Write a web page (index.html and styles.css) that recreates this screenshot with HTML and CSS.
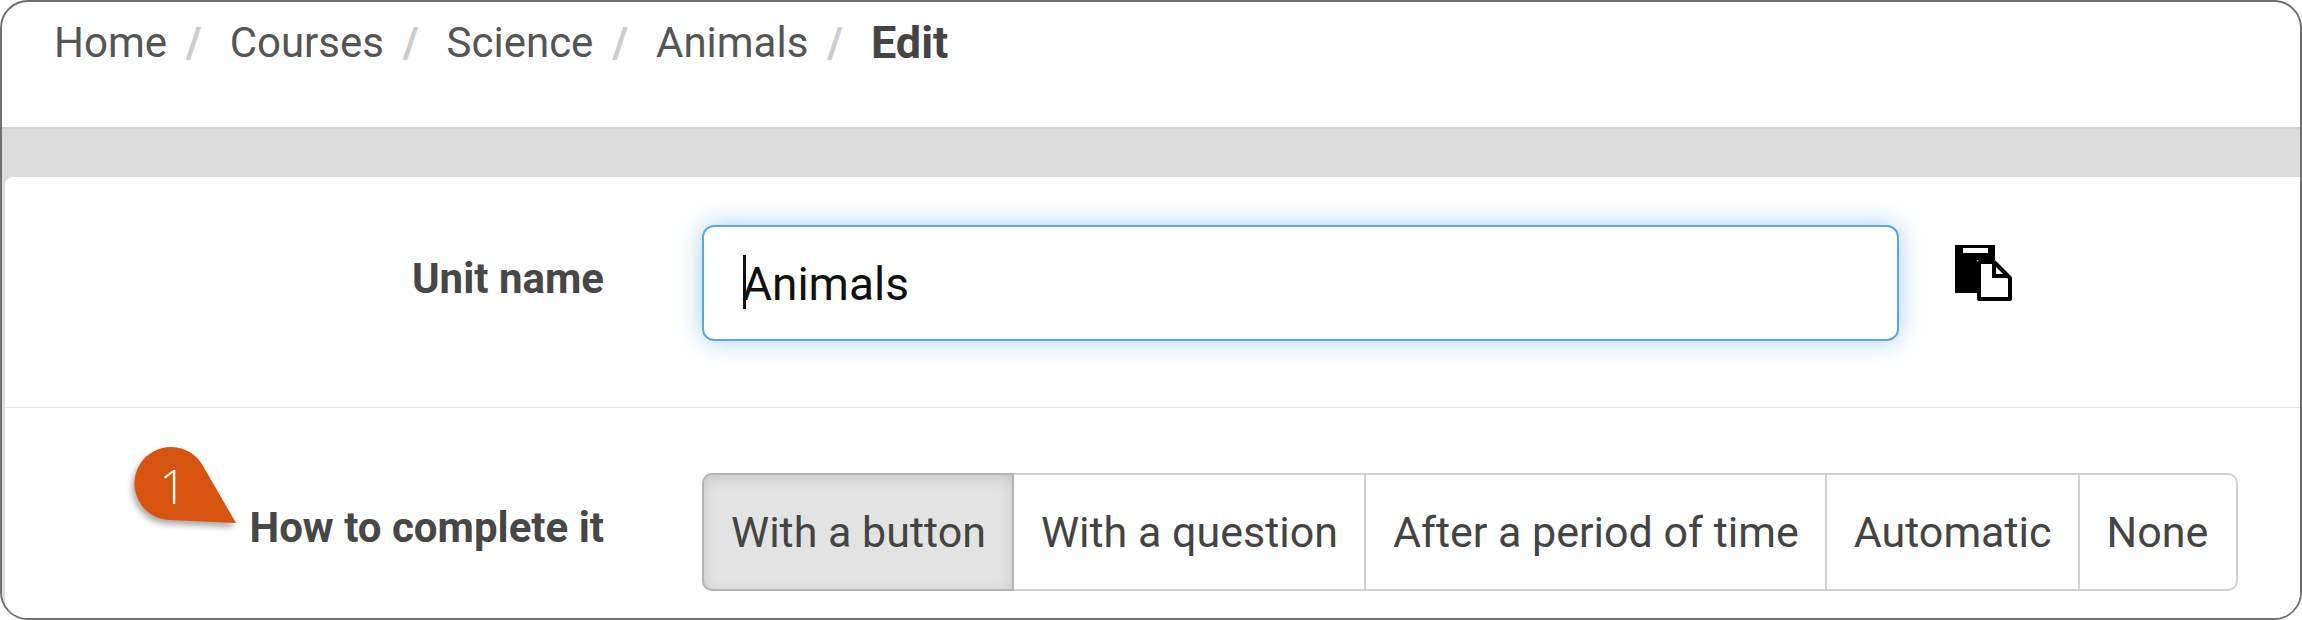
FILE: index.html
```html
<!DOCTYPE html>
<html lang="en">
<head>
<meta charset="utf-8">
<title>Edit unit</title>
<link rel="stylesheet" href="styles.css">
</head>
<body>
<div class="frame">
  <nav class="crumbs">
    <span class="crumb">Home</span><span class="sep">/</span>
    <span class="crumb">Courses</span><span class="sep">/</span>
    <span class="crumb">Science</span><span class="sep">/</span>
    <span class="crumb">Animals</span><span class="sep">/</span>
    <span class="crumb current">Edit</span>
  </nav>
  <div class="band">
    <div class="card">
      <div class="row name-row">
        <div class="label">Unit name</div>
        <div class="input"><span class="caret"></span>Animals</div>
        <svg class="copy" viewBox="0 0 58 57" width="58" height="57" aria-hidden="true">
          <path d="M0 0H40V15H22V48H0Z" fill="#000"/>
          <rect x="8" y="3" width="25" height="5" fill="#fff"/>
          <path d="M24 17H39L55 33V54H24Z" fill="#fff" stroke="#000" stroke-width="4" stroke-linejoin="round"/>
          <path d="M39 18V31H54" fill="none" stroke="#000" stroke-width="4"/>
        </svg>
      </div>
      <div class="row complete-row">
        <div class="label">How to complete it</div>
        <div class="group">
          <div class="seg active">With a button</div>
          <div class="seg">With a question</div>
          <div class="seg">After a period of time</div>
          <div class="seg">Automatic</div>
          <div class="seg">None</div>
        </div>
      </div>
    </div>
  </div>
  <div class="pin">
    <svg class="pin-shape" viewBox="0 0 106 80" width="106" height="80" aria-hidden="true">
      <path d="M69 19 L102 76 L36 73 A36.5 36.5 0 1 1 69 19 Z" fill="#d6540f"/>
    </svg>
    <span class="pin-num">1</span>
  </div>
</div>
</body>
</html>
```
FILE: styles.css
```css
* { box-sizing: border-box; }
html, body { margin: 0; padding: 0; background: #fff; }
body { width: 2302px; height: 620px; overflow: hidden; font-family: Roboto, sans-serif; }
.frame {
  position: relative;
  width: 2302px;
  height: 620px;
  border: 2px solid #707070;
  border-radius: 28px;
  overflow: hidden;
  background: #fff;
  display: flex;
  flex-direction: column;
}
.crumbs {
  height: 125px;
  flex: none;
  padding: 14px 0 0 52px;
  display: flex;
  align-items: flex-start;
  font-size: 42px;
  line-height: 54px;
  color: #555;
}
.sep { color: #ccc; font-weight: 700; margin: 0 28px 0 19px; }
.current { font-weight: 700; font-size: 45px; color: #444; }
.band {
  flex: 1;
  background: #dcdcdc;
  border-top: 2px solid #d4d4d4;
  padding: 48px 0 0 3px;
}
.card {
  background: #fff;
  height: 100%;
  border-radius: 8px 0 0 0;
}
.row { display: flex; align-items: flex-start; }
.name-row { height: 231px; border-bottom: 1px solid #e6e6e6; padding-top: 48px; }
.complete-row { padding-top: 65px; }
.label {
  width: 599px;
  flex: none;
  text-align: right;
  font-size: 42px;
  font-weight: 700;
  line-height: 54px;
  color: #474747;
}
.name-row .label { margin-top: 27px; }
.complete-row .label { margin-top: 28px; }
.input {
  margin-left: 98px;
  width: 1197px;
  height: 116px;
  border: 2px solid #5aa5ea;
  border-radius: 12px;
  box-shadow: 0 0 26px rgba(90, 165, 234, .5);
  padding-left: 38px;
  font-size: 46px;
  line-height: 114px;
  color: #111;
  position: relative;
}
.caret {
  position: absolute;
  left: 39px;
  top: 28px;
  width: 3px;
  height: 54px;
  background: #111;
}
.copy { margin: 20px 0 0 56px; flex: none; }
.group {
  margin-left: 98px;
  display: flex;
  height: 118px;
}
.seg {
  padding: 0 26px 0 27px;
  margin-left: -2px;
  font-size: 43px;
  line-height: 114px;
  color: #444;
  border: 2px solid #d2d2d2;
  white-space: nowrap;
}
.seg:first-child { margin-left: 0; border-radius: 10px 0 0 10px; }
.seg:last-child { border-radius: 0 10px 10px 0; padding-right: 28px; }
.seg.active {
  position: relative;
  background: #e3e3e3;
  border-color: #b4b4b4;
  box-shadow: inset 0 4px 14px rgba(0, 0, 0, .12);
}
.pin {
  position: absolute;
  left: 132px;
  top: 445px;
  width: 106px;
  height: 80px;
  filter: drop-shadow(-2px 4px 3px rgba(0,0,0,.35));
}
.pin-shape { display: block; }
.pin-num {
  position: absolute;
  left: 0;
  width: 78px;
  text-align: center;
  top: 6px;
  font-family: "Open Sans", sans-serif;
  font-weight: 300;
  font-size: 48px;
  line-height: 66px;
  color: #fff;
}
```
